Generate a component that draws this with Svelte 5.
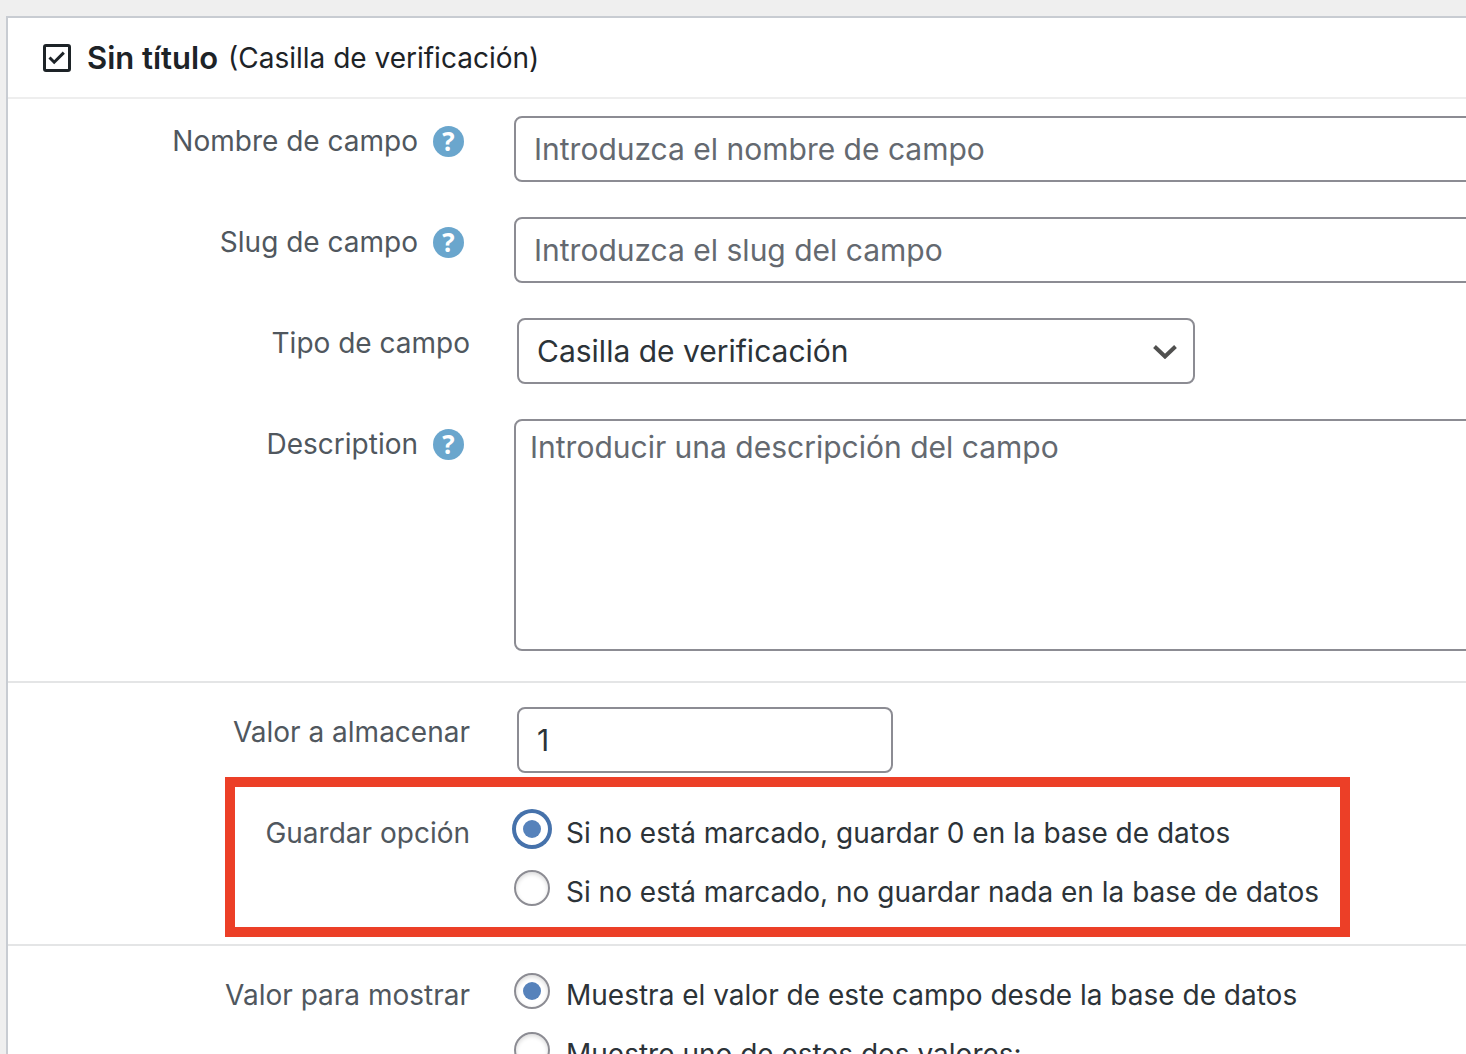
<script>
  let name = $state('');
  let slug = $state('');
  let type = $state('checkbox');
  let description = $state('');
  let storedValue = $state('1');
  let saveOption = $state('zero');
  let display = $state('database');

  const types = [
    { value: 'checkbox', label: 'Casilla de verificación' },
    { value: 'text', label: 'Texto' },
    { value: 'number', label: 'Número' }
  ];

  const saveOptions = [
    { value: 'zero', label: 'Si no está marcado, guardar 0 en la base de datos' },
    { value: 'nothing', label: 'Si no está marcado, no guardar nada en la base de datos' }
  ];

  const displayOptions = [
    { value: 'database', label: 'Muestra el valor de este campo desde la base de datos' },
    { value: 'custom', label: 'Muestre uno de estos dos valores:' }
  ];
</script>

<main class="page">
  <form class="panel">
    <header class="panel__header">
      <svg class="panel__icon" viewBox="0 0 28 28" width="28" height="28" aria-hidden="true">
        <rect x="1.5" y="1.5" width="25" height="25" rx="1.5" />
        <path d="M6.500 13.500l4.700 4.700 9.600-9.600" />
      </svg>
      <h1 class="panel__title">Sin título</h1>
      <span class="panel__subtitle">(Casilla de verificación)</span>
    </header>

    <section class="section section--first">
      <div class="row">
        <div class="row__label">
          <label for="field-name">Nombre de campo</label>
          <button type="button" class="help" aria-label="Ayuda">?</button>
        </div>
        <input id="field-name" class="control control--wide" type="text" placeholder="Introduzca el nombre de campo" bind:value={name} />
      </div>
      <div class="row">
        <div class="row__label">
          <label for="field-slug">Slug de campo</label>
          <button type="button" class="help" aria-label="Ayuda">?</button>
        </div>
        <input id="field-slug" class="control control--wide" type="text" placeholder="Introduzca el slug del campo" bind:value={slug} />
      </div>
      <div class="row">
        <div class="row__label">
          <label for="field-type">Tipo de campo</label>
        </div>
        <div class="select">
          <select id="field-type" class="control" bind:value={type}>
            {#each types as item}
              <option value={item.value}>{item.label}</option>
            {/each}
          </select>
          <svg class="select__arrow" viewBox="0 0 24 14" width="24" height="14" aria-hidden="true">
            <path d="M1.5 1.5L12 11.5 22.5 1.5" />
          </svg>
        </div>
      </div>
      <div class="row">
        <div class="row__label">
          <label for="field-description">Description</label>
          <button type="button" class="help" aria-label="Ayuda">?</button>
        </div>
        <textarea id="field-description" class="control control--wide control--area" placeholder="Introducir una descripción del campo" bind:value={description}></textarea>
      </div>
    </section>

    <section class="section">
      <div class="row">
        <div class="row__label">
          <label for="field-value">Valor a almacenar</label>
        </div>
        <input id="field-value" class="control control--short" type="text" bind:value={storedValue} />
      </div>
      <div class="row row--marked">
        <div class="row__label" id="save-label">Guardar opción</div>
        <div class="options" role="radiogroup" aria-labelledby="save-label">
          {#each saveOptions as option}
            <label class="option">
              <input class="option__radio option__radio--ring" type="radio" name="save" value={option.value} bind:group={saveOption} />
              <span class="option__text">{option.label}</span>
            </label>
          {/each}
        </div>
      </div>
    </section>

    <section class="section">
      <div class="row">
        <div class="row__label" id="display-label">Valor para mostrar</div>
        <div class="options" role="radiogroup" aria-labelledby="display-label">
          {#each displayOptions as option}
            <label class="option">
              <input class="option__radio" type="radio" name="display" value={option.value} bind:group={display} />
              <span class="option__text">{option.label}</span>
            </label>
          {/each}
        </div>
      </div>
    </section>
  </form>
</main>

<style>
  :global(body) {
    background: #efefef;
  }

  .page {
    padding: 16px 0 0 6px;
    overflow: hidden;
    font-family: Inter, "Liberation Sans", sans-serif;
    font-size: 28px;
    line-height: 36px;
    color: #2c3338;
  }

  .panel {
    margin-right: -24px;
    border: 2px solid #c8ccd2;
    background: #fff;
  }

  .panel__header {
    display: flex;
    align-items: center;
    padding: 22px 35px 21px;
    color: #1d2327;
  }

  .panel__icon {
    margin-right: 16px;
    fill: none;
    stroke: #1d2327;
    stroke-width: 3;
  }

  .panel__title {
    margin: 0 10px 0 0;
    font-size: 31px;
    font-weight: 600;
  }

  .panel__subtitle {
    font-size: 28px;
  }

  .section {
    display: flex;
    flex-direction: column;
    gap: 35px;
    padding: 24px 0 34px;
    border-top: 2px solid #e4e5e6;
  }

  .section--first {
    padding: 17px 0 30px;
    border-top-color: #eeeeee;
  }

  .row {
    display: grid;
    grid-template-columns: 462px minmax(0, 1fr);
    column-gap: 44px;
    align-items: start;
  }

  .row--marked {
    position: relative;
  }

  /* highlight frame around the save options */
  .row--marked::after {
    content: '';
    position: absolute;
    top: -31px;
    left: 217px;
    box-sizing: border-box;
    width: 1125px;
    height: 160px;
    border: 10px solid #ec3f27;
    pointer-events: none;
  }

  .row__label {
    display: flex;
    justify-content: flex-end;
    align-items: center;
    padding-top: 7px;
    color: #50575e;
  }

  .help {
    width: 31px;
    height: 31px;
    margin: 0 6px 0 15px;
    padding: 0;
    border: none;
    border-radius: 50%;
    background: #6aa6cd;
    color: #fff;
    font: 700 26px/31px "Open Sans", sans-serif;
    text-align: center;
    cursor: pointer;
  }

  .control {
    box-sizing: border-box;
    width: 100%;
    height: 66px;
    margin: 0;
    padding: 0 18px;
    border: 2px solid #8c8c93;
    border-radius: 8px;
    background: #fff;
    color: #2c3338;
    font-family: inherit;
    font-size: 30px;
    line-height: 36px;
  }

  .control::placeholder {
    color: #646970;
    opacity: 1;
  }

  .control--short {
    width: 376px;
    margin-left: 3px;
  }

  .control--area {
    display: block;
    height: 232px;
    padding: 8px 14px;
    resize: none;
  }

  .select {
    position: relative;
    width: 678px;
    margin-left: 3px;
  }

  .select .control {
    display: block;
    appearance: none;
  }

  .select__arrow {
    position: absolute;
    top: 27px;
    right: 18px;
    fill: none;
    stroke: #50504f;
    stroke-width: 4;
    pointer-events: none;
  }

  .options {
    display: flex;
    flex-direction: column;
    gap: 19px;
    padding-top: 3px;
  }

  .option {
    display: flex;
    align-items: flex-start;
    gap: 16px;
  }

  .option__radio {
    appearance: none;
    display: grid;
    place-content: center;
    flex: none;
    box-sizing: border-box;
    width: 36px;
    height: 36px;
    margin: 0;
    border: 2px solid #8c8c93;
    border-radius: 50%;
    background: #fff;
    box-shadow: inset 0 2px 4px rgba(0, 0, 0, 0.15);
  }

  .option__radio:checked::before {
    content: '';
    width: 18px;
    height: 18px;
    border-radius: 50%;
    background: #5682bb;
  }

  .option__radio--ring:checked {
    border-color: #4672ab;
    box-shadow: 0 0 0 2px #4672ab;
  }

  .option__text {
    padding-top: 4px;
  }
</style>
